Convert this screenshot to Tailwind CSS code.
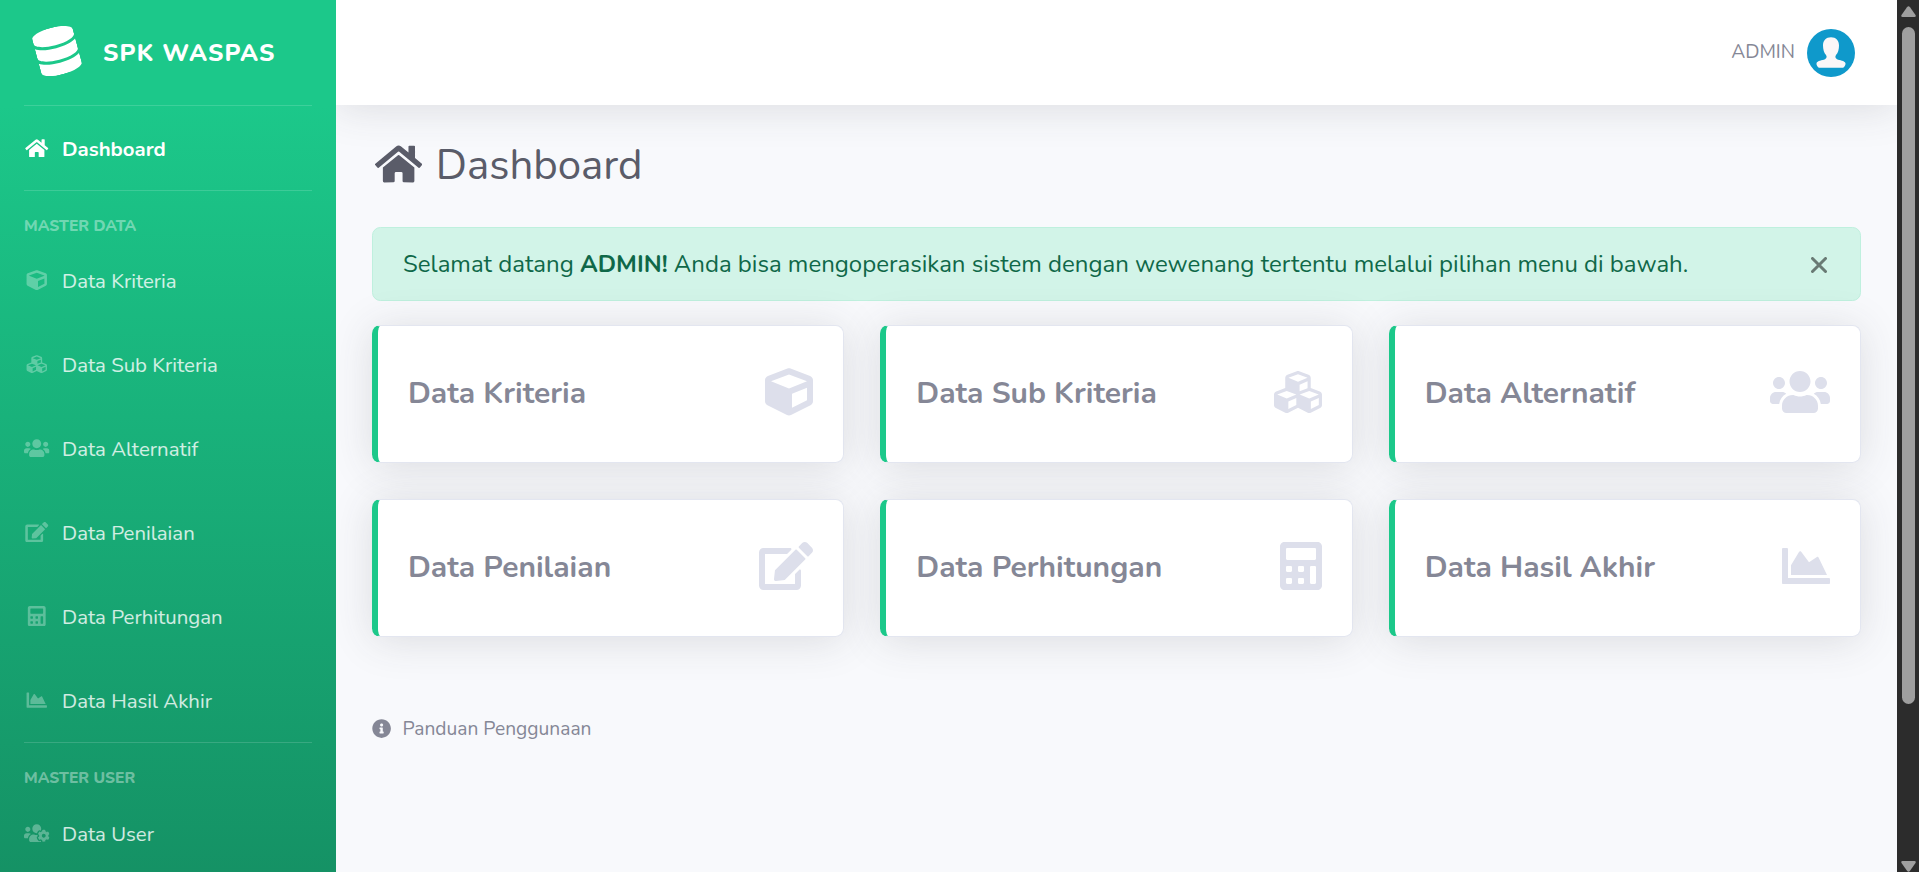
<!DOCTYPE html>
<html lang="id">
<head>
<meta charset="utf-8">
<title>SPK WASPAS</title>
<script src="https://cdn.jsdelivr.net/npm/@tailwindcss/browser@4"></script>
</head>
<body class="overflow-hidden bg-[#f8f9fc] font-['Nunito','Lato',sans-serif] text-[#858796]">
<svg class="hidden">
  <symbol id="home" viewBox="0 0 576 512"><path d="M280.37 148.26L96 300.11V464a16 16 0 0 0 16 16l112.06-.29a16 16 0 0 0 15.92-16V368a16 16 0 0 1 16-16h64a16 16 0 0 1 16 16v95.64a16 16 0 0 0 16 16.05L464 480a16 16 0 0 0 16-16V300L295.67 148.26a12.19 12.19 0 0 0-15.3 0zM571.6 251.47L488 182.56V44.05a12 12 0 0 0-12-12h-56a12 12 0 0 0-12 12v72.61L318.47 43a48 48 0 0 0-61 0L4.34 251.47a12 12 0 0 0-1.6 16.9l25.5 31A12 12 0 0 0 45.15 301l235.22-193.74a12.19 12.19 0 0 1 15.3 0L530.9 301a12 12 0 0 0 16.9-1.6l25.5-31a12 12 0 0 0-1.7-16.93z"/></symbol>
  <symbol id="database" viewBox="0 0 448 512"><path d="M448 73.143v45.714C448 159.143 347.667 192 224 192S0 159.143 0 118.857V73.143C0 32.857 100.333 0 224 0s224 32.857 224 73.143zM448 176v102.857C448 319.143 347.667 352 224 352S0 319.143 0 278.857V176c48.125 33.143 136.208 48.572 224 48.572S399.874 209.143 448 176zm0 160v102.857C448 479.143 347.667 512 224 512S0 479.143 0 438.857V336c48.125 33.143 136.208 48.572 224 48.572S399.874 369.143 448 336z"/></symbol>
  <symbol id="cube" viewBox="0 0 512 512"><path d="M239.1 6.3l-208 78c-18.7 7-31.1 25-31.1 45v225.1c0 18.2 10.3 34.8 26.5 42.9l208 104c13.5 6.8 29.4 6.8 42.9 0l208-104c16.3-8.1 26.5-24.8 26.5-42.9V129.3c0-20-12.4-37.9-31.1-44.9l-208-78C262 2.2 250 2.2 239.1 6.3zM256 68.4l192 72v1.1l-192 78-192-78v-1.1l192-72zm32 356V275.5l160-65v133.9l-160 80z"/></symbol>
  <symbol id="cubes" viewBox="0 0 512 512"><path d="M488.6 250.2L392 214V105.5c0-15-9.3-28.4-23.4-33.7l-100-37.5c-8.1-3.1-17.1-3.1-25.3 0l-100 37.5c-14.1 5.3-23.4 18.7-23.4 33.7V214l-96.6 36.2C9.3 255.5 0 268.9 0 283.9V394c0 13.6 7.7 26.1 19.9 32.2l100 50c10.1 5.1 22.1 5.1 32.2 0l103.9-52 103.9 52c10.1 5.1 22.1 5.1 32.2 0l100-50c12.2-6.1 19.9-18.6 19.9-32.2V283.9c0-15-9.3-28.4-23.4-33.7zM358 214.8l-85 31.9v-68.2l85-37v73.3zM154 104.1l102-38.2 102 38.2v.6l-102 41.4-102-41.4v-.6zm84 291.1l-85 42.5v-79.1l85-38.8v75.4zm0-112l-102 41.4-102-41.4v-.6l102-38.2 102 38.2v.6zm240 112l-85 42.5v-79.1l85-38.8v75.4zm0-112l-102 41.4-102-41.4v-.6l102-38.2 102 38.2v.6z"/></symbol>
  <symbol id="users" viewBox="0 0 640 512"><path d="M96 224c35.3 0 64-28.7 64-64s-28.7-64-64-64-64 28.7-64 64 28.7 64 64 64zm448 0c35.3 0 64-28.7 64-64s-28.7-64-64-64-64 28.7-64 64 28.7 64 64 64zm32 32h-64c-17.6 0-33.5 7.1-45.1 18.6 40.3 22.1 68.9 62 75.1 109.4h66c17.7 0 32-14.3 32-32v-32c0-35.3-28.7-64-64-64zm-256 0c61.9 0 112-50.1 112-112S381.9 32 320 32 208 82.1 208 144s50.1 112 112 112zm76.8 32h-8.3c-20.8 10-43.9 16-68.5 16s-47.6-6-68.5-16h-8.3C179.6 288 128 339.6 128 403.2V432c0 26.5 21.5 48 48 48h288c26.5 0 48-21.5 48-48v-28.8c0-63.6-51.6-115.2-115.2-115.2zm-223.7-13.4C161.5 263.1 145.6 256 128 256H64c-35.3 0-64 28.7-64 64v32c0 17.7 14.3 32 32 32h65.9c6.3-47.4 34.9-87.3 75.2-109.4z"/></symbol>
  <symbol id="edit" viewBox="0 0 576 512"><path d="M402.6 83.2l90.2 90.2c3.8 3.8 3.8 10 0 13.8L274.4 405.6l-92.8 10.3c-12.4 1.4-22.9-9.1-21.5-21.5l10.3-92.8L388.8 83.2c3.8-3.8 10-3.8 13.8 0zm162-22.9l-48.8-48.8c-15.2-15.2-39.9-15.2-55.2 0l-35.4 35.4c-3.8 3.8-3.8 10 0 13.8l90.2 90.2c3.8 3.8 10 3.8 13.8 0l35.4-35.4c15.2-15.3 15.2-40 0-55.2zM384 346.2V448H64V128h229.8c3.2 0 6.2-1.3 8.5-3.5l40-40c7.6-7.6 2.2-20.5-8.5-20.5H48C21.5 64 0 85.5 0 112v352c0 26.5 21.5 48 48 48h352c26.5 0 48-21.5 48-48V306.2c0-10.7-12.9-16-20.5-8.5l-40 40c-2.2 2.3-3.5 5.3-3.5 8.5z"/></symbol>
  <symbol id="calculator" viewBox="0 0 448 512"><path d="M400 0H48C22.4 0 0 22.4 0 48v416c0 25.6 22.4 48 48 48h352c25.6 0 48-22.4 48-48V48c0-25.6-22.4-48-48-48zM128 435.2c0 6.4-6.4 12.8-12.8 12.8H76.8c-6.4 0-12.8-6.4-12.8-12.8v-38.4c0-6.4 6.4-12.8 12.8-12.8h38.4c6.4 0 12.8 6.4 12.8 12.8v38.4zm0-128c0 6.4-6.4 12.8-12.8 12.8H76.8c-6.4 0-12.8-6.4-12.8-12.8v-38.4c0-6.4 6.4-12.8 12.8-12.8h38.4c6.4 0 12.8 6.4 12.8 12.8v38.4zm128 128c0 6.4-6.4 12.8-12.8 12.8h-38.4c-6.4 0-12.8-6.4-12.8-12.8v-38.4c0-6.4 6.4-12.8 12.8-12.8h38.4c6.4 0 12.8 6.4 12.8 12.8v38.4zm0-128c0 6.4-6.4 12.8-12.8 12.8h-38.4c-6.4 0-12.8-6.4-12.8-12.8v-38.4c0-6.4 6.4-12.8 12.8-12.8h38.4c6.4 0 12.8 6.4 12.8 12.8v38.4zm128 128c0 6.4-6.4 12.8-12.8 12.8h-38.4c-6.4 0-12.8-6.4-12.8-12.8V268.8c0-6.4 6.4-12.8 12.8-12.8h38.4c6.4 0 12.8 6.4 12.8 12.8v166.4zm0-256c0 6.4-6.4 12.8-12.8 12.8H76.8c-6.4 0-12.8-6.4-12.8-12.8V76.8C64 70.4 70.4 64 76.8 64h294.4c6.4 0 12.8 6.4 12.8 12.8v102.4z"/></symbol>
  <symbol id="chart" viewBox="0 0 512 512"><path d="M500 384c6.6 0 12 5.4 12 12v40c0 6.6-5.4 12-12 12H12c-6.6 0-12-5.4-12-12V76c0-6.6 5.4-12 12-12h40c6.6 0 12 5.4 12 12v308h436zM372.7 159.5L288 216l-85.3-113.7c-5.1-6.8-15.5-6.3-19.9 1L96 248v104h384l-89.9-187.8c-3.2-6.5-11.4-8.7-17.4-4.7z"/></symbol>
  <symbol id="users-cog" viewBox="0 0 640 512"><path d="M610.5 341.3c2.6-14.1 2.6-28.5 0-42.6l25.8-14.9c3-1.7 4.3-5.2 3.3-8.5-6.7-21.6-18.2-41.2-33.2-57.4-2.3-2.5-6-3.1-9-1.4l-25.8 14.9c-10.9-9.3-23.4-16.5-36.9-21.3v-29.8c0-3.4-2.4-6.4-5.7-7.1-22.3-5-45-4.8-66.2 0-3.3.7-5.7 3.7-5.7 7.1v29.8c-13.5 4.8-26 12-36.9 21.3l-25.8-14.9c-2.9-1.7-6.7-1.1-9 1.4-15 16.2-26.5 35.8-33.2 57.4-1 3.3.4 6.8 3.3 8.5l25.8 14.9c-2.6 14.1-2.6 28.5 0 42.6l-25.8 14.9c-3 1.7-4.3 5.2-3.3 8.5 6.7 21.6 18.2 41.1 33.2 57.4 2.3 2.5 6 3.1 9 1.4l25.8-14.9c10.9 9.3 23.4 16.5 36.9 21.3v29.8c0 3.4 2.4 6.4 5.7 7.1 22.3 5 45 4.8 66.2 0 3.3-.7 5.7-3.7 5.7-7.1v-29.8c13.5-4.8 26-12 36.9-21.3l25.8 14.9c2.9 1.7 6.7 1.1 9-1.4 15-16.2 26.5-35.8 33.2-57.4 1-3.3-.4-6.8-3.3-8.5l-25.8-14.9zM496 368.5c-26.8 0-48.5-21.8-48.5-48.5s21.8-48.5 48.5-48.5 48.5 21.8 48.5 48.5-21.7 48.5-48.5 48.5zM96 224c35.3 0 64-28.7 64-64s-28.7-64-64-64-64 28.7-64 64 28.7 64 64 64zm224 32c1.9 0 3.7-.5 5.6-.6 8.3-21.7 20.5-42.1 36.3-59.2 7.4-8 17.9-12.6 28.9-12.6 6.9 0 13.7 1.8 19.6 5.3l7.9 4.6c.8-.5 1.6-.9 2.4-1.4 7-14.6 11.2-30.8 11.2-48 0-61.9-50.1-112-112-112S208 82.1 208 144c0 61.9 50.1 112 112 112zm105.2 194.5c-2.3-1.2-4.6-2.6-6.8-3.9-8.2 4.8-15.3 9.8-27.5 9.8-10.9 0-21.4-4.6-28.9-12.6-18.3-19.8-32.3-43.9-40.2-69.6-10.7-34.5 24.9-49.7 25.8-50.3-.1-2.6-.1-5.2 0-7.8l-7.9-4.6c-3.8-2.2-7-5-9.8-8.1-3.3.2-6.5.6-9.8.6-24.6 0-47.6-6-68.5-16h-8.3C179.6 288 128 339.6 128 403.2V432c0 26.5 21.5 48 48 48h255.4c-3.7-6-6.2-12.8-6.2-20.3v-9.2zM173.1 274.6C161.5 263.1 145.6 256 128 256H64c-35.3 0-64 28.7-64 64v32c0 17.7 14.3 32 32 32h65.9c6.3-47.4 34.9-87.3 75.2-109.4z"/></symbol>
  <symbol id="info" viewBox="0 0 512 512"><path d="M256 8C119.043 8 8 119.083 8 256c0 136.997 111.043 248 248 248s248-111.003 248-248C504 119.083 392.957 8 256 8zm0 110c23.196 0 42 18.804 42 42s-18.804 42-42 42-42-18.804-42-42 18.804-42 42-42zm56 254c0 6.627-5.373 12-12 12h-88c-6.627 0-12-5.373-12-12v-24c0-6.627 5.373-12 12-12h12v-64h-12c-6.627 0-12-5.373-12-12v-24c0-6.627 5.373-12 12-12h64c6.627 0 12 5.373 12 12v100h12c6.627 0 12 5.373 12 12v24z"/></symbol>
</svg>

<div class="flex h-[872px] w-[1919px] overflow-hidden">
  <!-- Sidebar -->
  <aside class="h-[1053px] w-[336px] shrink-0 bg-[linear-gradient(180deg,#1cc88a_10%,#13855c_100%)] text-white">
    <div class="flex h-[105px] items-center pl-[36px]">
      <svg class="mb-[3px] h-12 w-[42px] -rotate-[15deg] fill-white"><use href="#database"/></svg>
      <span class="ml-[25px] text-[24px] font-extrabold tracking-[1.2px]">SPK WASPAS</span>
    </div>
    <hr class="mx-6 border-0 h-px bg-white/15">
    <a class="flex h-[84px] items-center pt-0.5 pl-6 text-[20.4px] font-bold"><svg class="mr-[12.5px] mb-0.5 h-[20.4px] w-[25.5px] fill-white"><use href="#home"/></svg>Dashboard</a>
    <hr class="mx-6 border-0 h-px bg-white/15">
    <div class="flex h-[47px] items-end px-6 text-[15.6px] font-extrabold text-white/40">MASTER DATA</div>
    <nav class="text-[20.4px] text-white/80">
      <a class="flex h-[84px] items-center pt-0.5 pl-6"><svg class="mr-[12.5px] mb-0.5 h-[20.4px] w-[25.5px] fill-white/30"><use href="#cube"/></svg>Data Kriteria</a>
      <a class="flex h-[84px] items-center pt-0.5 pl-6"><svg class="mr-[12.5px] mb-0.5 h-[20.4px] w-[25.5px] fill-white/30"><use href="#cubes"/></svg>Data Sub Kriteria</a>
      <a class="flex h-[84px] items-center pt-0.5 pl-6"><svg class="mr-[12.5px] mb-0.5 h-[20.4px] w-[25.5px] fill-white/30"><use href="#users"/></svg>Data Alternatif</a>
      <a class="flex h-[84px] items-center pt-0.5 pl-6"><svg class="mr-[12.5px] mb-0.5 h-[20.4px] w-[25.5px] fill-white/30"><use href="#edit"/></svg>Data Penilaian</a>
      <a class="flex h-[84px] items-center pt-0.5 pl-6"><svg class="mr-[12.5px] mb-0.5 h-[20.4px] w-[25.5px] fill-white/30"><use href="#calculator"/></svg>Data Perhitungan</a>
      <a class="flex h-[84px] items-center pt-0.5 pl-6"><svg class="mr-[12.5px] mb-0.5 h-[20.4px] w-[25.5px] fill-white/30"><use href="#chart"/></svg>Data Hasil Akhir</a>
    </nav>
    <hr class="mx-6 border-0 h-px bg-white/15">
    <div class="flex h-[48px] items-end px-6 pb-px text-[15.6px] font-extrabold text-white/40">MASTER USER</div>
    <a class="flex h-[84px] items-center pt-0.5 pl-6 text-[20.4px] text-white/80"><svg class="mr-[12.5px] mb-0.5 h-[20.4px] w-[25.5px] fill-white/30"><use href="#users-cog"/></svg>Data User</a>
  </aside>

  <!-- Content -->
  <div class="w-[1561px] shrink-0 overflow-hidden">
    <header class="flex h-[105px] items-center justify-end bg-white pr-[42px] shadow-[0_3.6px_42px_0_rgba(58,59,69,0.15)]">
      <span class="mr-3 text-[19.2px]">ADMIN</span>
      <svg class="size-12" viewBox="0 0 48 48"><circle cx="24" cy="24" r="24" fill="#0f99cb"/><path fill="#faf7f8" d="M24 8.3c-5 0-8 3.3-8 8.1 0 4 1 7.3 3 9.6 1.1 1.5.8 3.3-1 4.2-2.8 1.3-7.6 1.2-8.500 4-.3 1.800 1 3.500 2.400 4.600h24.200c1.400-1.100 2.700-2.800 2.400-4.600-.9-2.800-5.700-2.700-8.500-4-1.800-.9-2.100-2.700-1-4.200 2-2.300 3-5.600 3-9.600 0-4.800-3-8.100-8-8.100z"/></svg>
    </header>
    <main class="px-9 pt-9">
      <h1 class="flex h-[50px] items-center text-[42px] leading-[50px] text-[#5a5c69]"><svg class="mr-[13.5px] mb-[5px] ml-[3px] h-[42px] w-[47.25px] fill-[#5a5c69]"><use href="#home"/></svg>Dashboard</h1>
      <div class="mt-9 flex h-[74px] items-center justify-between rounded-[8.4px] border border-[#bff0de] bg-[#d2f4e8] pr-[33px] pl-[30px] text-[24px] text-[#0f6848]">
        <p>Selamat datang <strong class="font-bold">ADMIN!</strong> Anda bisa mengoperasikan sistem dengan wewenang tertentu melalui pilihan menu di bawah.</p>
        <svg class="mt-px h-4 w-4 fill-none stroke-[#697a74] stroke-3" viewBox="0 0 16 16" stroke-linecap="round"><path d="M1.5 1.5l13 13m0-13l-13 13"/></svg>
      </div>
      <div class="mt-[24px] grid grid-cols-3 gap-9 text-[30px] font-bold">
        <div class="flex h-[138px] items-center justify-between rounded-[8.4px] border border-l-6 border-[#e3e6f0] border-l-[#1cc88a] bg-white px-[30px] pb-0.5 shadow-[0_3.6px_42px_0_rgba(58,59,69,0.15)]">Data Kriteria<svg class="mb-0.5 h-12 w-12 fill-[#dddfeb]"><use href="#cube"/></svg></div>
        <div class="flex h-[138px] items-center justify-between rounded-[8.4px] border border-l-6 border-[#e3e6f0] border-l-[#1cc88a] bg-white px-[30px] pb-0.5 shadow-[0_3.6px_42px_0_rgba(58,59,69,0.15)]">Data Sub Kriteria<svg class="mb-0.5 h-12 w-12 fill-[#dddfeb]"><use href="#cubes"/></svg></div>
        <div class="flex h-[138px] items-center justify-between rounded-[8.4px] border border-l-6 border-[#e3e6f0] border-l-[#1cc88a] bg-white px-[30px] pb-0.5 shadow-[0_3.6px_42px_0_rgba(58,59,69,0.15)]">Data Alternatif<svg class="mb-0.5 h-12 w-[60px] fill-[#dddfeb]"><use href="#users"/></svg></div>
        <div class="flex h-[138px] items-center justify-between rounded-[8.4px] border border-l-6 border-[#e3e6f0] border-l-[#1cc88a] bg-white px-[30px] pb-0.5 shadow-[0_3.6px_42px_0_rgba(58,59,69,0.15)]">Data Penilaian<svg class="mb-0.5 h-12 w-[54px] fill-[#dddfeb]"><use href="#edit"/></svg></div>
        <div class="flex h-[138px] items-center justify-between rounded-[8.4px] border border-l-6 border-[#e3e6f0] border-l-[#1cc88a] bg-white px-[30px] pb-0.5 shadow-[0_3.6px_42px_0_rgba(58,59,69,0.15)]">Data Perhitungan<svg class="mb-0.5 h-12 w-[42px] fill-[#dddfeb]"><use href="#calculator"/></svg></div>
        <div class="flex h-[138px] items-center justify-between rounded-[8.4px] border border-l-6 border-[#e3e6f0] border-l-[#1cc88a] bg-white px-[30px] pb-0.5 shadow-[0_3.6px_42px_0_rgba(58,59,69,0.15)]">Data Hasil Akhir<svg class="mb-0.5 h-12 w-12 fill-[#dddfeb]"><use href="#chart"/></svg></div>
      </div>
      <a class="mt-[77px] flex h-[30px] items-center text-[19.2px]"><svg class="mr-[11.4px] mb-px size-[19.2px] fill-[#858796]"><use href="#info"/></svg>Panduan Penggunaan</a>
    </main>
  </div>

  <!-- Scrollbar -->
  <div class="flex h-[872px] w-[22px] shrink-0 flex-col items-center bg-[#2c2c2c] pt-[6px]">
    <svg class="h-[11px] w-[15px] fill-[#9f9f9f]" viewBox="0 0 15 11"><path d="M6 1.3q1.5-2 3 0l5.5 7.7q.8 2-1 2h-12q-1.8 0-1-2z"/></svg>
    <div class="mt-[10px] h-[677px] w-[13px] rounded-full bg-[#9f9f9f]"></div>
    <svg class="mt-[157px] h-[11px] w-[15px] shrink-0 fill-[#9f9f9f]" viewBox="0 0 15 11"><path d="M6 9.7q1.5 2 3 0l5.5-7.7q.8-2-1-2h-12q-1.8 0-1 2z"/></svg>
  </div>
</div>
</body>
</html>
